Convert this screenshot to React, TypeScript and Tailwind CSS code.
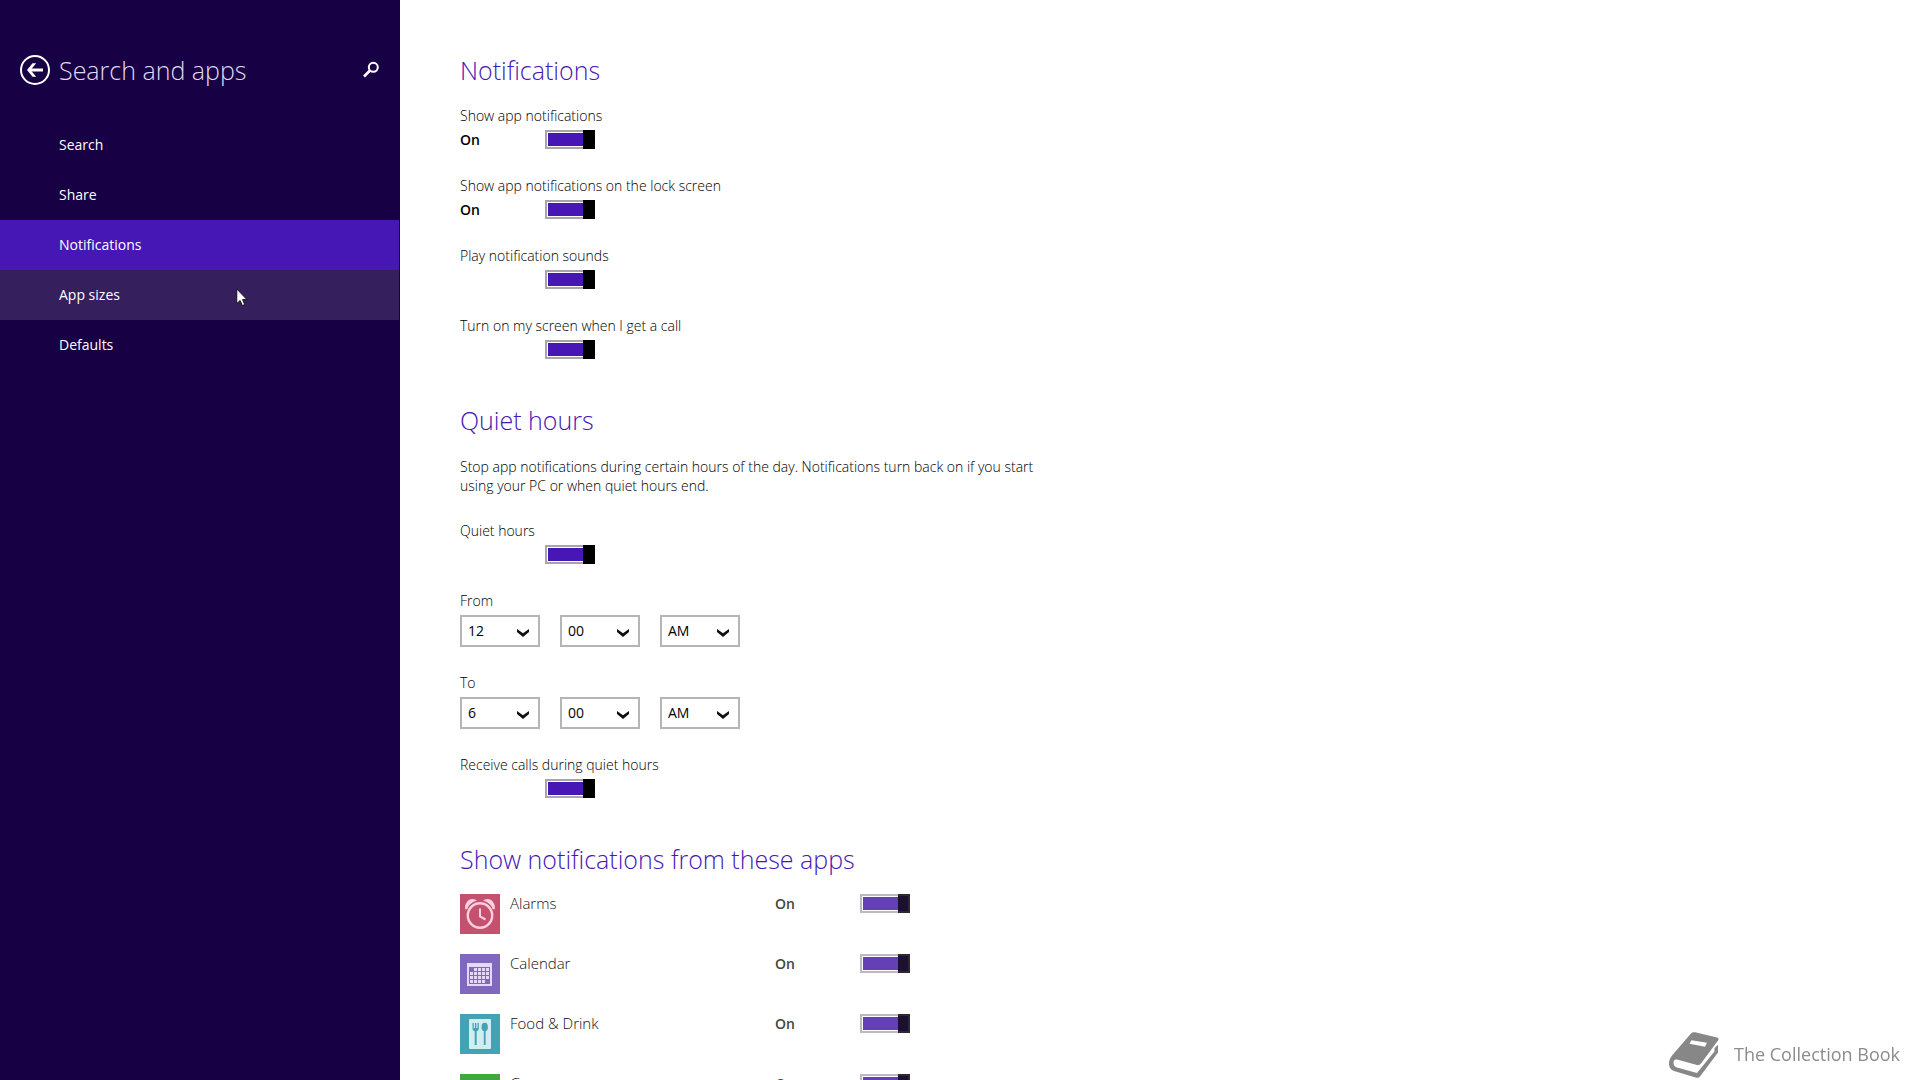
import { useId, useState } from 'react';
import type { ReactNode } from 'react';
import clsx from 'clsx';

const NAV_ITEMS = ['Search', 'Share', 'Notifications', 'App sizes', 'Defaults'];

const HOURS = ['1', '2', '3', '4', '5', '6', '7', '8', '9', '10', '11', '12'];
const MINUTES = ['00', '15', '30', '45'];
const PERIODS = ['AM', 'PM'];

const APPS: { name: string; tile: string; icon: ReactNode }[] = [
  { name: 'Alarms', tile: 'bg-[#c4526f]', icon: <AlarmIcon /> },
  { name: 'Calendar', tile: 'bg-[#8068be]', icon: <CalendarIcon /> },
  { name: 'Food & Drink', tile: 'bg-[#43a2b3]', icon: <FoodIcon /> },
  { name: 'Games', tile: 'bg-[#3fa83c]', icon: null },
];

function AlarmIcon() {
  return (
    <svg viewBox="0 0 40 40" className="size-10" fill="none" stroke="#ffd0e0">
      <circle cx="20" cy="21.5" r="12.2" strokeWidth="2.4" />
      <path d="M20 14.5v8l5.5 3" strokeWidth="2" />
      <path d="M5.3 15.2C4.2 10 8 5 12.5 5c2 0 3.3.8 4.2 1.8C11.8 8 8.5 11.3 7.3 15.2z" fill="#ffd0e0" stroke="none" />
      <path d="M34.7 15.2C35.8 10 32 5 27.5 5c-2 0-3.3.8-4.2 1.8 4.9 1.2 8.2 4.5 9.4 8.4z" fill="#ffd0e0" stroke="none" />
    </svg>
  );
}

function CalendarIcon() {
  const cells: ReactNode[] = [];
  for (let row = 0; row < 4; row++) {
    for (let col = 0; col < 5; col++) {
      if ((row === 0 && col === 0) || (row === 3 && col === 4)) continue;
      cells.push(<rect key={`${row}-${col}`} x={10 + col * 4} y={14 + row * 4} width="3" height="3" fill="#e4d8fb" />);
    }
  }
  return (
    <svg viewBox="0 0 40 40" className="size-10">
      <path d="M7 9h25v23H7zM9 13v17h21V13z" fill="#e4d8fb" fillRule="evenodd" />
      {cells}
    </svg>
  );
}

function FoodIcon() {
  return (
    <svg viewBox="0 0 40 40" className="size-10">
      <rect x="9" y="5" width="22" height="30" rx="1" fill="#d0eef2" />
      <g fill="#43a2b3">
        <path d="M12.5 9h1.2v5h1.2V9h1.4v5h1.2V9h1.3v5.5c0 1.5-1 2.5-2.1 2.8V31h-2V17.3c-1.2-.3-2.2-1.3-2.2-2.8z" />
        <ellipse cx="24.7" cy="13" rx="3.2" ry="4.3" />
        <rect x="23.8" y="16" width="1.8" height="15" />
      </g>
    </svg>
  );
}

function BookIcon() {
  return (
    <svg viewBox="0 0 50 46" className="h-[46px] w-[50px]">
      <path
        d="M22 1.5Q23.5-.3 26 .3L48 5.500Q50.5 6.2 49 8.5L32 31.5Q30.5 33.5 28 33L8 27.500Q4.5 27 4.5 30.5 4.5 34.5 8 35.5L28 41 45.5 19.5V16l3.500-3.200V20.5L31 44.500Q29.5 46.2 27.5 45.700L5 39Q-.5 37 0 30.500.2 27 3 23.5z"
        fill="#878787"
      />
      <path d="M22.5 8.2l15.5 2.6-2 4-15.5-3z" fill="#fff" />
    </svg>
  );
}

function Cursor() {
  return (
    <svg viewBox="0 0 12 19" className="h-[19px] w-3">
      <path d="M.8 1v14.5l3.3-3 2.3 5 2.3-1-2.2-4.900h4.400z" fill="#fff" stroke="#000" strokeWidth=".8" />
    </svg>
  );
}

function Toggle({ labelId, dimmed = false }: { labelId: string; dimmed?: boolean }) {
  const [on, setOn] = useState(true);
  return (
    <button
      role="switch"
      aria-checked={on}
      aria-labelledby={labelId}
      onClick={() => setOn(!on)}
      className={clsx('flex h-[19px] w-[50px]', !on && 'flex-row-reverse')}
    >
      <span className={clsx('h-full flex-1 border-2 border-r-0 p-px pr-0', dimmed ? 'border-[#bdb8c2]' : 'border-[#a8a3ad]')}>
        <span className={clsx('block h-full', !on ? 'bg-[#a6a6a6]' : dimmed ? 'bg-[#6340b6]' : 'bg-[#4617b4]')} />
      </span>
      <span className={clsx('h-full w-3', dimmed ? 'border-2 border-l-0 border-[#2c2a30] bg-[#1c1030]' : 'bg-black')} />
    </button>
  );
}

function ToggleSetting({ label, status }: { label: string; status?: string }) {
  const id = useId();
  return (
    <div>
      <div id={id} className="mb-1 leading-5">{label}</div>
      <div className="flex h-5 items-start">
        <span className="w-[85px] font-semibold leading-5">{status}</span>
        <Toggle labelId={id} />
      </div>
    </div>
  );
}

function Select({ label, options, initial }: { label: string; options: string[]; initial: string }) {
  const [value, setValue] = useState(initial);
  return (
    <div className="relative">
      <select
        aria-label={label}
        value={value}
        onChange={(e) => setValue(e.target.value)}
        className="block h-8 w-20 appearance-none border-2 border-[#b5b5b5] bg-white pl-1.5 font-normal leading-5 outline-none"
      >
        {options.map((o) => <option key={o}>{o}</option>)}
      </select>
      <svg viewBox="0 0 12 8" className="pointer-events-none absolute top-[14px] right-[11px] h-2 w-3">
        <path d="M0 0L6 4.3 12 0V3L6 8 0 3z" fill="#111" />
      </svg>
    </div>
  );
}

function TimeSetting({ label, hour }: { label: string; hour: string }) {
  return (
    <fieldset>
      <legend className="mb-1 leading-5">{label}</legend>
      <div className="flex gap-5">
        <Select label={`${label} hour`} options={HOURS} initial={hour} />
        <Select label={`${label} minute`} options={MINUTES} initial="00" />
        <Select label={`${label} period`} options={PERIODS} initial="AM" />
      </div>
    </fieldset>
  );
}

function AppRow({ name, tile, icon }: { name: string; tile: string; icon: ReactNode }) {
  const id = useId();
  return (
    <li className="flex h-10 items-start">
      <div className={clsx('size-10', tile)}>{icon}</div>
      <span id={id} className="ml-2.5 w-[265px] text-[15px] leading-[19px] text-[#111]">{name}</span>
      <span className="w-[85px] font-semibold leading-5 text-[#444]">On</span>
      <Toggle labelId={id} dimmed />
    </li>
  );
}

function Heading({ children }: { children: ReactNode }) {
  return <h2 className="text-[25px] font-light leading-9 text-[#4617b4]">{children}</h2>;
}

function Sidebar() {
  const [active, setActive] = useState('Notifications');
  return (
    <aside className="w-[400px] shrink-0 bg-[#170044] text-white">
      <header className="flex items-center px-5 pt-[52px]">
        <button aria-label="Back">
          <svg viewBox="0 0 30 30" className="size-[30px]" fill="none" stroke="#fff">
            <circle cx="15" cy="15" r="14" strokeWidth="2" />
            <path d="M23 15H9" strokeWidth="3" />
            <path d="M12.5 8.3h3.7L10.5 15l5.7 6.7h-3.7L7 15z" fill="#fff" stroke="none" />
          </svg>
        </button>
        <h1 className="ml-[9px] flex-1 text-[25px] font-light leading-9 text-[#e2d8f2]">Search and apps</h1>
        <button aria-label="Search settings">
          <svg viewBox="0 0 18 18" className="size-[18px]" fill="none" stroke="#fff">
            <circle cx="11.3" cy="6.3" r="4.5" strokeWidth="2" />
            <path d="M8 9.5L2 15.5" strokeWidth="2.6" />
          </svg>
        </button>
      </header>
      <nav className="mt-8 flex flex-col pr-px">
        {NAV_ITEMS.map((item) => (
          <a
            key={item}
            href="#"
            onClick={(e) => { e.preventDefault(); setActive(item); }}
            className={clsx(
              'relative h-[50px] pl-[59px] leading-[50px]',
              item === active ? 'bg-[#4617b4]' : item === 'App sizes' ? 'bg-[#35205d]' : 'hover:bg-[#35205d]',
            )}
          >
            {item}
            {item === 'App sizes' && (
              <span className="pointer-events-none absolute top-[18px] left-[236px]"><Cursor /></span>
            )}
          </a>
        ))}
      </nav>
    </aside>
  );
}

export default function App() {
  return (
    <div className="flex h-screen overflow-hidden bg-white font-['Open_Sans','Noto_Sans',sans-serif] text-[14px] text-black">
      <Sidebar />
      <main className="flex min-w-0 flex-1 flex-col gap-[42px] pt-[52px] pl-[60px] font-light">
        <section>
          <Heading>Notifications</Heading>
          <div className="mt-[18px] flex flex-col gap-[26px]">
            <ToggleSetting label="Show app notifications" status="On" />
            <ToggleSetting label="Show app notifications on the lock screen" status="On" />
            <ToggleSetting label="Play notification sounds" />
            <ToggleSetting label="Turn on my screen when I get a call" />
          </div>
        </section>

        <section>
          <Heading>Quiet hours</Heading>
          <p className="mt-[19px] mb-[26px] max-w-[600px] leading-[19px]">
            Stop app notifications during certain hours of the day. Notifications turn back on if you start using your PC or when quiet hours end.
          </p>
          <div className="flex flex-col gap-[26px]">
            <ToggleSetting label="Quiet hours" />
            <TimeSetting label="From" hour="12" />
            <TimeSetting label="To" hour="6" />
            <ToggleSetting label="Receive calls during quiet hours" />
          </div>
        </section>

        <section>
          <Heading>Show notifications from these apps</Heading>
          <ul className="mt-[17px] flex flex-col gap-5">
            {APPS.map((app) => <AppRow key={app.name} {...app} />)}
          </ul>
        </section>
      </main>

      {/* Channel watermark */}
      <div className="pointer-events-none fixed right-5 bottom-0.5 flex items-center gap-[15px] text-[18px] text-[#8c8c8c]">
        <BookIcon />
        <span className="pb-0.5">The Collection Book</span>
      </div>
    </div>
  );
}
